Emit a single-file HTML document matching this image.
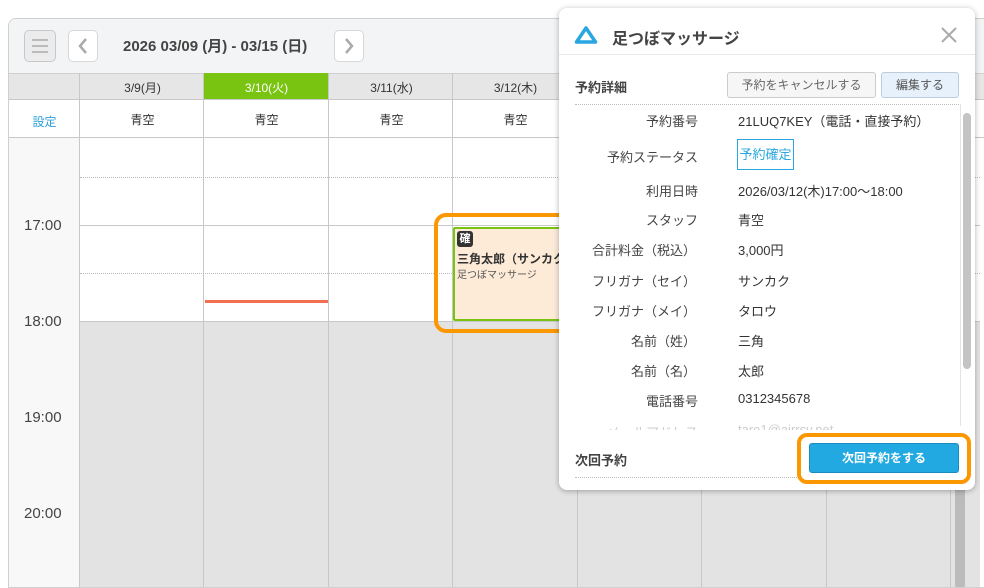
<!DOCTYPE html>
<html><head><meta charset="utf-8"><style>
*{box-sizing:border-box;margin:0;padding:0}
body{width:984px;height:572px;overflow:hidden;background:#fff;font-family:"Liberation Sans","Noto Sans CJK JP",sans-serif;color:#333;position:relative}
.abs{position:absolute}
.cal{left:8px;top:18px;width:1000px;height:570px;border:1px solid #d0d0d0;border-radius:8px 0 0 0;overflow:hidden;background:#fff}
.vl{position:absolute;width:1px;background:#c8c8c8}
.hl{position:absolute;height:1px;background:#c8c8c8}
.dl{position:absolute;height:0;border-top:1px dotted #bbb}
.ctr{text-align:center;font-size:12px}
.lbl{position:absolute;right:286px;width:200px;text-align:right;font-size:13px;color:#444}
.val{position:absolute;left:738px;font-size:13px;color:#333}
</style></head><body>
<div class="abs cal">
 <div class="abs" style="left:0;top:0;width:1000px;height:54px;background:#f3f4f5"></div>
 <div class="abs" style="left:15px;top:11px;width:32px;height:32px;border:1px solid #c8c8c8;border-radius:5px;background:#ececec"></div>
 <div class="abs" style="left:23px;top:20px;width:16px;height:2px;background:#bbb;box-shadow:0 6px 0 #bbb,0 12px 0 #bbb"></div>
 <div class="abs" style="left:59px;top:11px;width:30px;height:32px;border:1px solid #d8d8d8;border-radius:5px;background:#fff"></div>
 <svg class="abs" style="left:66px;top:18px" width="16" height="18"><path d="M11 2 L5 9 L11 16" stroke="#aaa" stroke-width="2.5" fill="none"/></svg>
 <div class="abs" style="left:114px;top:16px;font-size:15px;font-weight:bold;color:#444">2026 03/09 (月) - 03/15 (日)</div>
 <div class="abs" style="left:325px;top:11px;width:30px;height:32px;border:1px solid #d8d8d8;border-radius:5px;background:#fff"></div>
 <svg class="abs" style="left:332px;top:18px" width="16" height="18"><path d="M5 2 L11 9 L5 16" stroke="#aaa" stroke-width="2.5" fill="none"/></svg>
 <div class="abs" style="left:0;top:54px;width:1000px;height:26px;background:#e6e6e6;border-top:1px solid #d0d0d0"></div>
 <div class="abs" style="left:0;top:80px;width:71px;height:500px;background:#f8f8f8"></div>
 <div class="abs" style="left:71px;top:302px;width:900px;height:280px;background:#e3e3e3"></div>
 <div class="abs" style="left:195px;top:54px;width:125px;height:26px;background:#79c311"></div>
 <div class="abs ctr" style="left:71px;top:60px;width:125px">3/9(月)</div>
 <div class="abs ctr" style="left:195px;top:60px;width:125px;color:#fff">3/10(火)</div>
 <div class="abs ctr" style="left:320px;top:60px;width:125px">3/11(水)</div>
 <div class="abs ctr" style="left:444px;top:60px;width:125px">3/12(木)</div>
 <div class="hl" style="left:0;top:80px;width:1000px"></div>
 <div class="abs" style="left:0;top:81px;width:71px;height:37px;background:#fff"></div>
 <div class="abs ctr" style="left:0;top:94px;width:71px;color:#2a9fd8">設定</div>
 <div class="abs ctr" style="left:71px;top:92px;width:125px">青空</div>
 <div class="abs ctr" style="left:195px;top:92px;width:125px">青空</div>
 <div class="abs ctr" style="left:320px;top:92px;width:125px">青空</div>
 <div class="abs ctr" style="left:444px;top:92px;width:125px">青空</div>
 <div class="hl" style="left:0;top:118px;width:1000px"></div>
 <div class="vl" style="left:70px;top:54px;height:520px"></div>
 <div class="vl" style="left:194px;top:54px;height:520px"></div>
 <div class="vl" style="left:319px;top:54px;height:520px"></div>
 <div class="vl" style="left:443px;top:54px;height:520px"></div>
 <div class="vl" style="left:568px;top:54px;height:520px"></div>
 <div class="vl" style="left:692px;top:54px;height:520px"></div>
 <div class="vl" style="left:817px;top:54px;height:520px"></div>
 <div class="vl" style="left:941px;top:54px;height:520px"></div>
 <div class="dl" style="left:71px;top:158px;width:900px"></div>
 <div class="hl" style="left:71px;top:206px;width:900px"></div>
 <div class="dl" style="left:71px;top:254px;width:900px"></div>
 <div class="hl" style="left:71px;top:302px;width:900px"></div>
 <div class="abs" style="left:196px;top:281px;width:123px;height:3px;background:#f07050"></div>
 <div class="abs" style="left:15px;top:198px;font-size:15px;color:#444">17:00</div>
 <div class="abs" style="left:15px;top:294px;font-size:15px;color:#444">18:00</div>
 <div class="abs" style="left:15px;top:390px;font-size:15px;color:#444">19:00</div>
 <div class="abs" style="left:15px;top:486px;font-size:15px;color:#444">20:00</div>
 <div class="abs" style="left:444px;top:208px;width:130px;height:94px;background:#fdebd8;border:2px solid #79c311;border-radius:2px"></div>
 <div class="abs" style="left:448px;top:212px;width:16px;height:16px;background:#333;border-radius:3px;color:#fff;font-size:11px;font-weight:bold;text-align:center;line-height:16px">確</div>
 <div class="abs" style="left:448px;top:231px;font-size:12px;font-weight:bold;white-space:nowrap">三角太郎（サンカク</div>
 <div class="abs" style="left:448px;top:247px;font-size:10px;color:#555;white-space:nowrap">足つぼマッサージ</div>
 <div class="abs" style="left:946px;top:300px;width:10px;height:270px;background:#bbb;border-radius:4px"></div>
</div>
<div class="abs" style="left:434px;top:213px;width:164px;height:120px;border:4px solid #fb9700;border-radius:12px"></div>
<div class="abs" style="left:559px;top:8px;width:416px;height:482px;background:#fff;border-radius:8px;box-shadow:0 1px 6px rgba(0,0,0,.3)"></div>
<svg class="abs" style="left:574px;top:25px" width="24" height="20"><path d="M12 3 L21.5 17 L2.5 17 Z" stroke="#2aa6e0" stroke-width="3.5" fill="none" stroke-linejoin="round"/></svg>
<div class="abs" style="left:612px;top:25px;font-size:16px;font-weight:bold;color:#444">足つぼマッサージ</div>
<svg class="abs" style="left:940px;top:26px" width="18" height="18"><path d="M2 2 L16 16 M16 2 L2 16" stroke="#aaa" stroke-width="2"/></svg>
<div class="hl" style="left:559px;top:54px;width:416px;background:#e8e8e8"></div>
<div class="abs" style="left:575px;top:77px;font-size:13px;font-weight:bold;color:#444">予約詳細</div>
<div class="abs" style="left:727px;top:72px;width:149px;height:26px;border:1px solid #ccc;border-radius:3px;background:#f6f6f6;font-size:12px;color:#666;text-align:center;line-height:24px">予約をキャンセルする</div>
<div class="abs" style="left:881px;top:72px;width:78px;height:26px;border:1px solid #bcd;border-radius:3px;background:#e6f1fb;font-size:12px;color:#555;text-align:center;line-height:24px">編集する</div>
<div class="dl" style="left:575px;top:104px;width:384px"></div>
<div class="lbl" style="top:111px">予約番号</div><div class="val" style="top:111px">21LUQ7KEY（電話・直接予約）</div>
<div class="lbl" style="top:147px">予約ステータス</div>
<div class="abs" style="left:737px;top:139px;width:57px;height:31px;border:1px solid #2aa6e0;color:#2aa6e0;font-size:13px;text-align:center;line-height:29px">予約確定</div>
<div class="lbl" style="top:181px">利用日時</div><div class="val" style="top:181px">2026/03/12(木)17:00～18:00</div>
<div class="lbl" style="top:210px">スタッフ</div><div class="val" style="top:210px">青空</div>
<div class="lbl" style="top:240px;right:288px">合計料金（税込）</div><div class="val" style="top:240px">3,000円</div>
<div class="lbl" style="top:271px;right:288px">フリガナ（セイ）</div><div class="val" style="top:271px">サンカク</div>
<div class="lbl" style="top:301px;right:288px">フリガナ（メイ）</div><div class="val" style="top:301px">タロウ</div>
<div class="lbl" style="top:331px;right:288px">名前（姓）</div><div class="val" style="top:331px">三角</div>
<div class="lbl" style="top:361px;right:288px">名前（名）</div><div class="val" style="top:361px">太郎</div>
<div class="lbl" style="top:391px">電話番号</div><div class="val" style="top:391px">0312345678</div>
<div class="abs" style="left:560px;top:418px;width:400px;height:12px;overflow:hidden"><div class="lbl" style="top:4px;right:262px;color:#ccc">メールアドレス</div><div class="abs" style="left:178px;top:4px;font-size:13px;color:#ccc">taro1@airrsv.net</div></div>
<div class="abs" style="left:960px;top:104px;width:1px;height:322px;background:#e4e4e4"></div>
<div class="abs" style="left:963px;top:113px;width:8px;height:256px;background:#c4c4c4;border-radius:4px"></div>
<div class="abs" style="left:575px;top:450px;font-size:13px;font-weight:bold;color:#444">次回予約</div>
<div class="dl" style="left:575px;top:477px;width:384px"></div>
<div class="abs" style="left:797px;top:433px;width:174px;height:51px;border:4px solid #fb9700;border-radius:10px;background:#fff"></div>
<div class="abs" style="left:809px;top:443px;width:150px;height:30px;background:#23a9e1;border:1px solid #1a8cc0;border-radius:3px;color:#fff;font-size:12px;text-align:center;line-height:28px;font-weight:bold">次回予約をする</div>
</body></html>
